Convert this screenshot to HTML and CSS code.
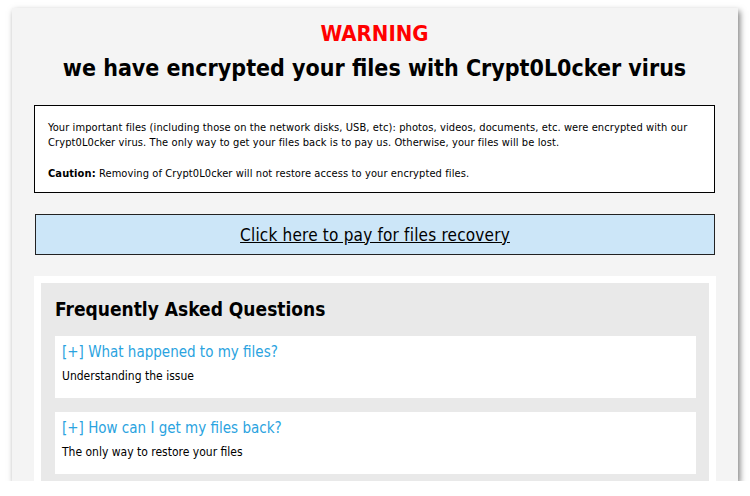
FILE: index.html
```html
<!DOCTYPE html>
<html>
<head>
<meta charset="utf-8">
<link rel="stylesheet" href="styles.css">
</head>
<body>
<div class="window">
  <h1 class="warn">WARNING</h1>
  <h2 class="headline">we have encrypted your files with Crypt0L0cker virus</h2>
  <div class="notice">
    <p>Your important files (including those on the network disks, USB, etc): photos, videos, documents, etc. were encrypted with our Crypt0L0cker virus. The only way to get your files back is to pay us. Otherwise, your files will be lost.</p>
    <p><b>Caution:</b> Removing of Crypt0L0cker will not restore access to your encrypted files.</p>
  </div>
  <div class="paybtn"><a href="#">Click here to pay for files recovery</a></div>
  <div class="faq-outer">
    <div class="faq">
      <h3>Frequently Asked Questions</h3>
      <div class="item">
        <div class="q">[+] What happened to my files?</div>
        <div class="a">Understanding the issue</div>
      </div>
      <div class="item">
        <div class="q">[+] How can I get my files back?</div>
        <div class="a">The only way to restore your files</div>
      </div>
    </div>
  </div>
</div>
</body>
</html>
```
FILE: styles.css
```css
html, body {
  margin: 0;
  padding: 0;
  background: #ffffff;
}
body {
  font-family: "DejaVu Sans Condensed", "DejaVu Sans", Tahoma, sans-serif;
  font-stretch: condensed;
  color: #000;
}
.window {
  margin: 8px 0 0 12px;
  width: 726px;
  height: 473px;
  box-sizing: border-box;
  background: #f4f4f4;
  overflow: hidden;
  padding: 13px 23px 0 22px;
  box-shadow: 2px 3px 6px rgba(0,0,0,0.5);
}
.warn {
  margin: 0;
  font-size: 22px;
  line-height: 26px;
  text-align: center;
  color: #ff0000;
  font-weight: bold;
}
.headline {
  margin: 6px 0 0;
  font-size: 23px;
  line-height: 30px;
  text-align: center;
  font-weight: bold;
}
.notice {
  margin-top: 22px;
  background: #fff;
  border: 1px solid #000;
  padding: 14px 13px 11px;
  font-size: 11px;
  line-height: 15px;
  letter-spacing: 0.1px;
}
.notice p {
  margin: 0 0 16px;
}
.notice p:last-child {
  margin-bottom: 0;
}
.paybtn {
  margin-top: 21px;
  height: 41px;
  box-sizing: border-box;
  border: 1px solid #222;
  background: #cce6f8;
  display: flex;
  align-items: center;
  justify-content: center;
  margin-left: 1px;
}
.paybtn a {
  color: #000;
  font-size: 17px;
  letter-spacing: 0.2px;
}
.faq-outer {
  margin-top: 21px;
  background: #fff;
  padding: 7px;
  margin-right: -1px;
}
.faq {
  background: #e9e9e9;
  padding: 14px 13px 10px 14px;
}
.faq h3 {
  margin: 0 0 15px;
  font-size: 19px;
  line-height: 24px;
  font-weight: bold;
}
.item {
  background: #fff;
  padding: 7px 7px 14px;
  margin-bottom: 14px;
}
.q {
  color: #2aa3e0;
  font-size: 15px;
  line-height: 18px;
}
.a {
  margin-top: 7px;
  font-size: 12px;
  line-height: 16px;
}
```
